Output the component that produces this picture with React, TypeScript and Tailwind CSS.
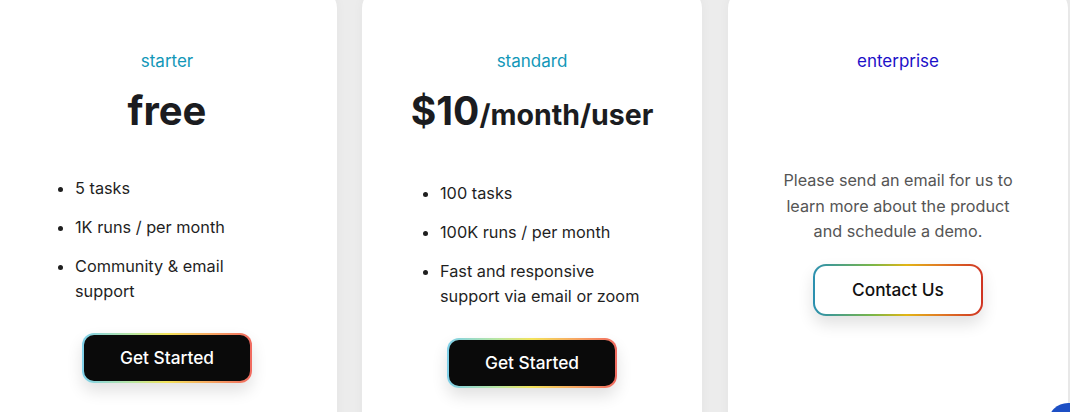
import React from "react";

const font = { fontFamily: "Inter, 'Noto Sans', sans-serif" };

function GetStarted() {
  return (
    <div className="rounded-[12px] p-[2px] bg-[linear-gradient(90deg,#7fd0ea_0%,#b9e6a0_30%,#f3e35a_50%,#f7a862_75%,#f06a60_100%)] shadow-[0_8px_16px_rgba(0,0,0,0.12)]">
      <div className="w-[166px] h-[46px] rounded-[10px] bg-[#0a0a0a] flex items-center justify-center text-white text-[17.3px] font-medium">
        Get Started
      </div>
    </div>
  );
}

function ContactUs() {
  return (
    <div className="rounded-[13px] p-[2px] bg-[linear-gradient(90deg,#2a8fb0_0%,#7ab648_35%,#e2b515_55%,#e07a25_75%,#cf3322_100%)] shadow-[0_8px_16px_rgba(0,0,0,0.12)]">
      <div className="w-[166px] h-[48px] rounded-[11px] bg-white flex items-center justify-center text-[#111] text-[17.3px] font-medium">
        Contact Us
      </div>
    </div>
  );
}

export default function App() {
  return (
    <div className="relative w-[1070px] h-[412px] overflow-hidden bg-[#ececec]" style={font}>
      <div className="flex gap-[25px] ml-[-3px] mt-[-10px]">
        {/* starter */}
        <div className="w-[340px] h-[460px] shrink-0 bg-white rounded-[18px] shadow-[0_0_12px_rgba(0,0,0,0.04)] flex flex-col items-center pt-[59px]">
          <div className="text-[17px] leading-6 text-[#1297b8]">starter</div>
          <div className="mt-[14px] text-[40px] leading-[48px] font-bold text-[#1b1c20]">free</div>
          <ul className="list-disc pl-[13px] ml-[65px] w-[218px] self-start text-[16.3px] leading-[25px] text-[#1f1f1f] flex flex-col gap-[14px] mt-[41px]">
            <li>5 tasks</li>
            <li>1K runs / per month</li>
            <li>Community &amp; email support</li>
          </ul>
          <div className="mt-[29px]">
            <GetStarted />
          </div>
        </div>

        {/* standard */}
        <div className="w-[340px] h-[460px] shrink-0 bg-white rounded-[18px] shadow-[0_0_12px_rgba(0,0,0,0.04)] flex flex-col items-center pt-[59px]">
          <div className="text-[17px] leading-6 text-[#1297b8]">standard</div>
          <div className="mt-[14px] leading-[48px] font-bold text-[#1b1c20]">
            <span className="text-[39px]">$10</span>
            <span className="text-[28.5px]">/month/user</span>
          </div>
          <ul className="list-disc pl-[13px] ml-[65px] w-[218px] self-start text-[16.3px] leading-[25px] text-[#1f1f1f] flex flex-col gap-[14px] mt-[38px]">
            <li>100 tasks</li>
            <li>100K runs / per month</li>
            <li>Fast and responsive support via email or zoom</li>
          </ul>
          <div className="mt-[29px]">
            <GetStarted />
          </div>
        </div>

        {/* enterprise */}
        <div className="w-[340px] h-[460px] shrink-0 bg-white rounded-[18px] shadow-[0_0_12px_rgba(0,0,0,0.04)] flex flex-col items-center pt-[59px] ml-[1px]">
          <div className="text-[17px] leading-6 text-[#1c0fc8]">enterprise</div>
          <p className="mt-[95px] w-[245px] text-center text-[16.2px] leading-[25.5px] text-[#555]">
            Please send an email for us to learn more about the product and schedule a demo.
          </p>
          <div className="mt-[19px]">
            <ContactUs />
          </div>
        </div>
      </div>
      <div className="absolute left-[1048px] top-[403px] w-[40px] h-[40px] rounded-full bg-[#1d4fc4]" />
    </div>
  );
}
